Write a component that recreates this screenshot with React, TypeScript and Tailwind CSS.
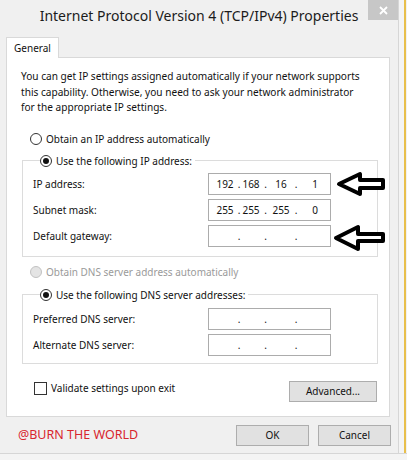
import type { ReactNode } from "react";

const PANEL_TEXT = "text-[10px] leading-[16px] text-[#111]";

function Radio({ checked = false, disabled = false }: { checked?: boolean; disabled?: boolean }) {
  return (
    <span
      className={`flex h-[12px] w-[12px] shrink-0 items-center justify-center rounded-full border ${
        disabled ? "border-[#c2c2c2] bg-[#e4e4e4]" : "border-[#333] bg-white"
      }`}
    >
      {checked && <span className="h-[6px] w-[6px] rounded-full bg-[#111]" />}
    </span>
  );
}

function RadioLabel({
  children,
  checked,
  disabled,
}: {
  children: ReactNode;
  checked?: boolean;
  disabled?: boolean;
}) {
  return (
    <span className={`flex h-[16px] items-center gap-[4px] ${disabled ? "text-[#9a9a9a]" : ""}`}>
      <Radio checked={checked} disabled={disabled} />
      <span>{children}</span>
    </span>
  );
}

/** Four-octet address box; dots sit between fixed-width segments. */
function IpField({ parts = ["", "", "", ""] }: { parts?: string[] }) {
  return (
    <div className="flex h-[22px] w-[123px] items-center border border-[#acacac] bg-white pl-[4px] text-[#111]">
      <span className="w-[24px] text-center">{parts[0]}</span>
      <span className="w-[4px] text-center">.</span>
      <span className="w-[20px] text-center">{parts[1]}</span>
      <span className="w-[9px] text-center">.</span>
      <span className="w-[22px] text-center">{parts[2]}</span>
      <span className="w-[8px] text-center">.</span>
      <span className="w-[30px] text-center">{parts[3]}</span>
    </div>
  );
}

function Row({ label, children }: { label: string; children: ReactNode }) {
  return (
    <div className="flex h-[22px] items-center justify-between">
      <span>{label}</span>
      {children}
    </div>
  );
}

function Button({ children, className = "" }: { children: ReactNode; className?: string }) {
  return (
    <button
      type="button"
      className={`flex h-[21px] items-center justify-center border border-[#adadad] bg-[#e1e1e1] text-[#111] ${className}`}
    >
      {children}
    </button>
  );
}

function GroupBox({ legend, children, className = "" }: { legend: ReactNode; children: ReactNode; className?: string }) {
  return (
    <fieldset className={`ml-[15px] mr-[11px] border border-[#dcdcdc] pl-[10px] pr-[46px] ${className}`}>
      <legend className="ml-[7px] bg-white pr-[3px]">{legend}</legend>
      {children}
    </fieldset>
  );
}

export default function App() {
  return (
    <div className="flex h-[460px] w-[407px] flex-col bg-[#f0f0f0] font-['Noto_Sans',sans-serif]">
      <div className="flex flex-1">
        <div className="flex w-[398px] flex-col">
          {/* title bar */}
          <div className="grid h-[37px] grid-cols-[1fr_auto_1fr] items-start">
            <div />
            <div className="mt-[6px] whitespace-nowrap text-[14px] leading-[20px] text-[#1b1b1b]">
              Internet Protocol Version 4 (TCP/IPv4) Properties
            </div>
            <div className="flex justify-end">
              <div className="flex h-[20px] w-[30px] items-center justify-center bg-[#c7c7c7]">
                <svg width="9" height="9" viewBox="0 0 9 9" stroke="white" strokeWidth="1.8">
                  <path d="M1 1L8 8M8 1L1 8" />
                </svg>
              </div>
            </div>
          </div>

          {/* tab */}
          <div className="relative z-10 -mb-px ml-[6px] flex h-[21px] w-[53px] items-center justify-center border border-b-0 border-[#d9d9d9] bg-white text-[10px] text-[#111]">
            General
          </div>

          {/* tab panel */}
          <div className={`ml-[6px] w-[384px] border border-[#d9d9d9] bg-white pb-[14px] ${PANEL_TEXT}`}>
            <p className="mt-[11px] whitespace-nowrap px-[14px] text-[10.1px] leading-[15.5px]">
              You can get IP settings assigned automatically if your network supports
              <br />
              this capability. Otherwise, you need to ask your network administrator
              <br />
              for the appropriate IP settings.
            </p>

            <div className="ml-[23px] mt-[15px]">
              <RadioLabel>Obtain an IP address automatically</RadioLabel>
            </div>

            <GroupBox className="mt-[6px] pb-[9px] pt-[4px]" legend={<RadioLabel checked>Use the following IP address:</RadioLabel>}>
              <div className="flex flex-col gap-[4px]">
                <Row label="IP address:">
                  <div className="relative">
                    <IpField parts={["192", "168", "16", "1"]} />
                    <svg className="absolute left-[128px] top-[-2px]" width="50" height="26" viewBox="0 0 50 26">
                      <path d="M3 13L24 3L24 9L47 9L47 17L24 17L24 23Z" fill="white" stroke="black" strokeWidth="4" strokeLinejoin="round" />
                    </svg>
                  </div>
                </Row>
                <Row label="Subnet mask:">
                  <IpField parts={["255", "255", "255", "0"]} />
                </Row>
                <Row label="Default gateway:">
                  <div className="relative">
                    <IpField />
                    <svg className="absolute left-[125px] top-[-1px]" width="53" height="28" viewBox="0 0 53 28">
                      <path d="M3 14L25 3L25 10L50 10L50 17L25 17L25 25Z" fill="white" stroke="black" strokeWidth="4" strokeLinejoin="round" />
                    </svg>
                  </div>
                </Row>
              </div>
            </GroupBox>

            <div className="ml-[23px] mt-[7px]">
              <RadioLabel disabled>Obtain DNS server address automatically</RadioLabel>
            </div>

            <GroupBox className="mt-[7px] pb-[7px] pt-[5px]" legend={<RadioLabel checked>Use the following DNS server addresses:</RadioLabel>}>
              <div className="flex flex-col gap-[4px]">
                <Row label="Preferred DNS server:">
                  <IpField />
                </Row>
                <Row label="Alternate DNS server:">
                  <IpField />
                </Row>
              </div>
            </GroupBox>

            <div className="ml-[27px] mr-[12px] mt-[17px] flex items-start justify-between">
              <label className="mt-[1px] flex items-center gap-[4px]">
                <span className="h-[13px] w-[13px] border border-[#333] bg-white" />
                <span className="leading-[13px]">Validate settings upon exit</span>
              </label>
              <Button className="w-[88px]">Advanced...</Button>
            </div>
          </div>

          {/* footer */}
          <div className="flex items-center pb-[7px] pl-[18px] pr-[7px] pt-[8px] text-[10px]">
            <span className="flex-1 text-[12.5px] text-[#d8262e]">@BURN THE WORLD</span>
            <div className="flex gap-[9px]">
              <Button className="w-[73px]">OK</Button>
              <Button className="w-[73px]">Cancel</Button>
            </div>
          </div>
        </div>

        {/* right window frame */}
        <div className="flex flex-1">
          <div className="w-[6px] border-l border-[#d6d6d6] bg-[#f4f4f4]" />
          <div className="w-[2px] bg-[#e8bf4c]" />
          <div className="flex-1 bg-[#f1f1f1]" />
        </div>
      </div>
      <div className="h-[7px] border-t border-[#d6d6d6] bg-[#f4f4f4]" />
    </div>
  );
}
